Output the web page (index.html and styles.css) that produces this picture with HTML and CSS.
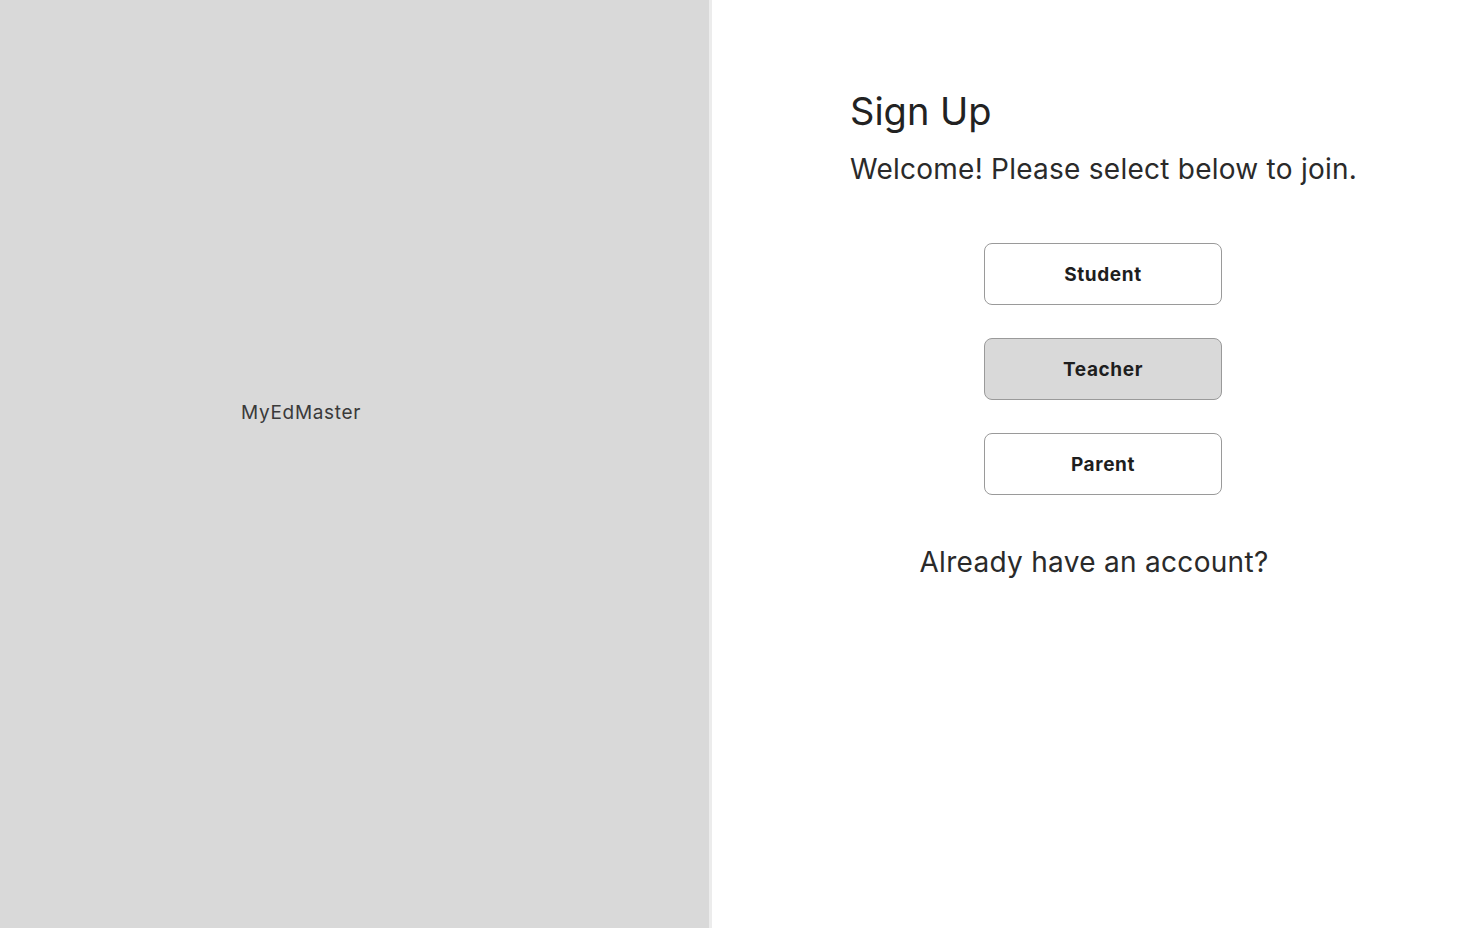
FILE: index.html
```html
<!DOCTYPE html>
<html lang="en">
<head>
<meta charset="utf-8">
<title>Sign Up - MyEdMaster</title>
<link rel="stylesheet" href="styles.css">
</head>
<body>
<div class="page">
  <aside class="brand-panel">
    <div class="brand">MyEdMaster</div>
  </aside>
  <main class="signup">
    <div class="signup-inner">
      <h1 class="title">Sign Up</h1>
      <p class="subtitle">Welcome! Please select below to join.</p>
      <div class="roles">
        <button class="role">Student</button>
        <button class="role role-active">Teacher</button>
        <button class="role">Parent</button>
      </div>
      <p class="login">Already have an account?</p>
    </div>
  </main>
</div>
</body>
</html>
```
FILE: styles.css
```css
* { box-sizing: border-box; }
html, body { margin: 0; padding: 0; height: 100%; }
body {
  font-family: "Inter", "Liberation Sans", sans-serif;
  color: #222;
  background: #fff;
}
.page {
  display: flex;
  width: 1460px;
  height: 928px;
}
.brand-panel {
  width: 712px;
  flex: none;
  background: #d9d9d9;
  border-right: 3px solid #ececec;
  display: flex;
  align-items: center;
  padding-left: 241px;
  padding-bottom: 104px;
}
.brand {
  font-size: 19px;
  color: #3a3a3a;
  letter-spacing: 0.7px;
}
.signup {
  flex: 1;
  padding: 88px 0 0 138px;
}
.signup-inner {
  width: 520px;
  display: flex;
  flex-direction: column;
}
.title {
  margin: 0;
  font-size: 38px;
  font-weight: 400;
  line-height: 46px;
  color: #222;
}
.subtitle {
  margin: 18px 0 0;
  font-size: 28px;
  line-height: 34px;
  letter-spacing: 0.25px;
  color: #2a2a2a;
}
.roles {
  margin-top: 57px;
  width: 506px;
  display: flex;
  flex-direction: column;
  align-items: center;
  gap: 33px;
}
.role {
  width: 238px;
  height: 62px;
  border: 1.5px solid #9a9a9a;
  border-radius: 8px;
  background: #fff;
  font-family: inherit;
  font-size: 19px;
  font-weight: 700;
  letter-spacing: 0.6px;
  color: #1e1e1e;
  cursor: pointer;
}
.role-active { background: #d9d9d9; }
.login {
  margin: 50px 0 0;
  width: 506px;
  text-align: center;
  padding-right: 18px;
  font-size: 28px;
  line-height: 34px;
  letter-spacing: 0.3px;
  color: #2a2a2a;
}
```
